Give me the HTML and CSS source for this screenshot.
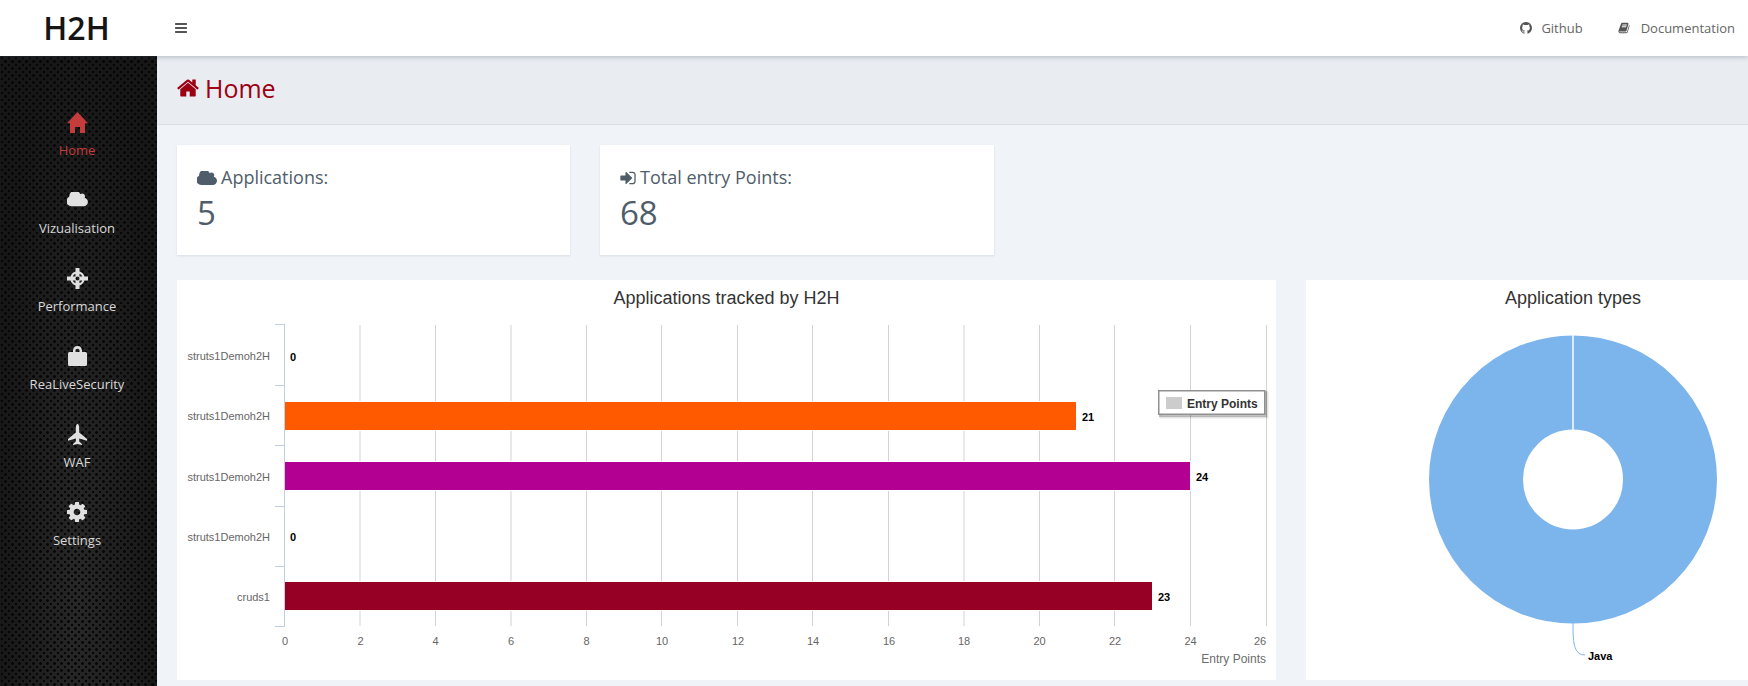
FILE: index.html
```html
<!DOCTYPE html>
<html lang="en">
<head>
<meta charset="utf-8">
<title>H2H</title>
<link rel="stylesheet" href="styles.css">
</head>
<body>
<header class="topbar">
  <div class="brand">H2H</div>
  <button class="toggle" aria-label="Toggle menu">
    <svg class="toggle-icon" viewBox="0 0 1792 1792"><path d="M1664 1344v128q0 26-19 45t-45 19h-1408q-26 0-45-19t-19-45v-128q0-26 19-45t45-19h1408q26 0 45 19t19 45zm0-512v128q0 26-19 45t-45 19h-1408q-26 0-45-19t-19-45v-128q0-26 19-45t45-19h1408q26 0 45 19t19 45zm0-512v128q0 26-19 45t-45 19h-1408q-26 0-45-19t-19-45v-128q0-26 19-45t45-19h1408q26 0 45 19t19 45z"/></svg>
  </button>
  <nav class="toplinks">
    <a class="toplink">
      <svg class="toplink-icon" viewBox="128 128 1536 1536"><path d="M896 128q209 0 385.500 103t279.500 279.500 103 385.500q0 251-146.500 451.500t-378.500 277.500q-27 5-40-7t-13-30q0-3 .5-76.500t.5-134.500q0-97-52-142 57-6 102.500-18t94-39 81-66.500 53-105 20.500-150.500q0-119-79-206 37-91-8-204-28-9-81 11t-92 44l-38 24q-93-26-192-26t-192 26q-16-11-42.500-27t-83.500-38.500-85-13.500q-45 113-8 204-79 87-79 206 0 85 20.500 150t52.500 105 80.500 67 94 39 102.500 18q-39 36-49 103-21 10-45 15t-57 5-65.500-21.500-55.500-62.500q-19-32-48.500-52t-49.500-24l-20-3q-21 0-29 4.500t-5 11.500 9 14 13 12l7 5q22 10 43.500 38t31.500 51l10 23q13 38 44 63t67 32 69.500 7 55.500-3.500l23-4q0 38 .5 88.500t.5 54.500q0 18-13 30t-40 7q-232-77-378.500-277.500t-146.500-451.500q0-209 103-385.500t279.500-279.500 385.500-103z"/></svg>
      <span>Github</span>
    </a>
    <a class="toplink toplink-doc">
      <svg class="toplink-icon" viewBox="0 128 1792 1536"><path d="M1703 478q40 57 18 129l-275 906q-19 64-76.500 107.500t-122.500 43.500h-923q-77 0-148.500-53.500t-99.500-131.500q-24-67-2-127 0-4 3-27t4-37q1-8-3-21.500t-3-19.500q2-11 8-21t16.500-23.500 16.500-23.500q23-38 45-91.500t30-91.500q3-10 .5-30t-.5-28q3-11 17-28t17-23q21-36 42-92t25-90q1-9-2.500-32t.5-28q4-13 22-30.500t22-22.500q19-26 42.500-84.500t27.500-96.500q1-8-3-25.500t-2-26.500q2-8 9-18t18-23 17-21q8-12 16.500-30.500t15-35 16-36 19.500-32 26.500-23.500 36-11.500 47.500 5.500l-1 3q38-9 51-9h761q74 0 114 56t18 130l-274 906q-36 119-71.500 153.500t-128.500 34.500h-869q-27 0-38 15-11 16-1 43 24 70 144 70h923q29 0 56-15.500t35-41.500l300-987q7-22 5-57 38 15 59 43zm-1064 2q-4 13 2 22.500t20 9.500h608q13 0 25.500-9.500t16.500-22.500l21-64q4-13-2-22.500t-20-9.500h-608q-13 0-25.500 9.500t-16.500 22.500zm-83 256q-4 13 2 22.500t20 9.500h608q13 0 25.500-9.500t16.500-22.500l21-64q4-13-2-22.500t-20-9.500h-608q-13 0-25.500 9.500t-16.500 22.500z"/></svg>
      <span>Documentation</span>
    </a>
  </nav>
</header>

<div class="layout">
  <aside class="sidebar">
    <a class="side-item active">
      <span class="side-icon"><svg width="21" height="21" viewBox="0 0 21 21"><path d="M10.500 0L21 11.300H18V21H13V15H8V21H3V11.300H0Z"/></svg></span>
      <span class="side-label">Home</span>
    </a>
    <a class="side-item">
      <span class="side-icon"><svg width="21" height="17" viewBox="0 256 1856 1520"><path d="M1856 1152q0 159-112.500 271.500t-271.500 112.500h-1088q-185 0-316.500-131.500t-131.500-316.500q0-132 71-241.500t187-163.500q-2-28-2-43 0-212 150-362t362-150q158 0 286.500 88t187.500 230q70-62 166-62 106 0 181 75t75 181q0 75-41 138 129 30 213 134.500t84 239.500z"/></svg></span>
      <span class="side-label">Vizualisation</span>
    </a>
    <a class="side-item">
      <span class="side-icon"><svg width="21" height="21" viewBox="0 0 21 21"><path fill-rule="evenodd" d="M8.500 0h4v3.600a7.200 7.200 0 0 1 4.900 4.900H21v4h-3.600a7.200 7.200 0 0 1-4.900 4.900V21h-4v-3.600a7.200 7.200 0 0 1-4.900-4.900H0v-4h3.600a7.200 7.200 0 0 1 4.900-4.900ZM8.500 5.700a5.200 5.200 0 0 0-2.800 2.800H8.500ZM12.500 5.700v2.800h2.800a5.200 5.200 0 0 0-2.800-2.800ZM5.700 12.500a5.200 5.200 0 0 0 2.800 2.800v-2.800ZM12.500 12.500v2.800a5.200 5.200 0 0 0 2.800-2.800ZM10.500 8.500a2 2 0 1 0 0 4 2 2 0 0 0 0-4Z"/></svg></span>
      <span class="side-label">Performance</span>
    </a>
    <a class="side-item">
      <span class="side-icon"><svg width="19" height="20" viewBox="0 0 19 20"><path fill-rule="evenodd" d="M1.500 6H5V4.700C5 1.800 6.800 0 9.500 0S14 1.800 14 4.700V6H17.500A1.500 1.500 0 0 1 19 7.500V18.500A1.500 1.500 0 0 1 17.500 20H1.500A1.500 1.500 0 0 1 0 18.500V7.500A1.500 1.500 0 0 1 1.500 6ZM7.500 6H11.500V4.700C11.500 3.500 10.800 2.800 9.500 2.800S7.500 3.500 7.500 4.700Z"/></svg></span>
      <span class="side-label">ReaLiveSecurity</span>
    </a>
    <a class="side-item">
      <span class="side-icon"><svg width="19" height="21" viewBox="0 0 19 21"><path d="M9.500 0C10.600 0 11.200 2 11.200 4V8.500L19 15V16.800L11.200 14.500V17.500L14 20V21L9.500 20L5 21V20L7.800 17.500V14.500L0 16.800V15L7.800 8.500V4C7.800 2 8.400 0 9.500 0Z"/></svg></span>
      <span class="side-label">WAF</span>
    </a>
    <a class="side-item">
      <span class="side-icon"><svg width="20" height="20" viewBox="128 128 1536 1536"><path d="M1152 896q0-106-75-181t-181-75-181 75-75 181 75 181 181 75 181-75 75-181zm512-109v222q0 12-8 23t-20 13l-185 28q-19 54-39 91 35 50 107 138 10 12 10 25t-9 23q-27 37-99 108t-94 71q-12 0-26-9l-138-108q-44 23-91 38-16 136-29 186-7 28-36 28h-222q-14 0-24.500-8.500t-11.500-21.500l-28-184q-49-16-90-37l-141 107q-10 9-25 9-14 0-25-11-126-114-165-168-7-10-7-23 0-12 8-23 15-21 51-66.500t54-70.500q-27-50-41-99l-183-27q-13-2-21-12.500t-8-23.500v-222q0-12 8-23t19-13l186-28q14-46 39-92-40-57-107-138-10-12-10-24 0-10 9-23 26-36 98.500-107.500t94.500-71.500q13 0 26 10l138 107q44-23 91-38 16-136 29-186 7-28 36-28h222q14 0 24.500 8.500t11.500 21.500l28 184q49 16 90 37l142-107q9-9 24-9 13 0 25 10 129 119 165 170 7 8 7 22 0 12-8 23-15 21-51 66.500t-54 70.500q26 50 41 98l183 28q13 2 21 12.500t8 23.500z"/></svg></span>
      <span class="side-label">Settings</span>
    </a>
  </aside>

  <main class="main">
    <div class="page-header">
      <h1 class="page-title">
        <svg class="page-title-icon" viewBox="0 0 1792 1792"><path d="M1472 992v480q0 26-19 45t-45 19h-384v-384h-256v384h-384q-26 0-45-19t-19-45v-480q0-1 .5-3t.5-3l575-474 575 474q1 2 1 6zm223-69l-62 74q-8 9-21 11h-3q-13 0-21-7l-692-577-692 577q-12 8-24 7-13-2-21-11l-62-74q-8-10-7-23.500t11-21.500l719-599q32-26 76-26t76 26l244 204v-195q0-14 9-23t23-9h192q14 0 23 9t9 23v408l219 182q10 8 11 21.500t-7 23.500z"/></svg>
        <span>Home</span>
      </h1>
    </div>

    <div class="content">
      <section class="stats">
        <div class="stat-card">
          <div class="stat-label">
            <svg class="stat-cloud" viewBox="0 256 1856 1280"><path d="M1856 1152q0 159-112.500 271.500t-271.500 112.500h-1088q-185 0-316.500-131.500t-131.500-316.500q0-132 71-241.500t187-163.500q-2-28-2-43 0-212 150-362t362-150q158 0 286.500 88t187.500 230q70-62 166-62 106 0 181 75t75 181q0 75-41 138 129 30 213 134.500t84 239.500z"/></svg>
            <span>Applications:</span>
          </div>
          <div class="stat-value">5</div>
        </div>
        <div class="stat-card">
          <div class="stat-label">
            <svg class="stat-signin" viewBox="0 192 1536 1408"><path d="M1184 896q0 26-19 45l-544 544q-19 19-45 19t-45-19-19-45v-288h-448q-26 0-45-19t-19-45v-384q0-26 19-45t45-19h448v-288q0-26 19-45t45-19 45 19l544 544q19 19 19 45zm352-352v704q0 119-84.500 203.500t-203.500 84.500h-320q-13 0-22.500-9.500t-9.500-22.500q0-4-1-20t-.5-26.500 3-23.500 10-19.500 20.500-6.500h320q66 0 113-47t47-113v-704q0-66-47-113t-113-47h-312l-11.500-1-11.500-3-8-5.500-7-9-2-13.500q0-4-1-20t-.5-26.500 3-23.500 10-19.500 20.500-6.500h320q119 0 203.500 84.500t84.500 203.500z"/></svg>
            <span>Total entry Points:</span>
          </div>
          <div class="stat-value">68</div>
        </div>
      </section>

      <section class="charts">
        <div class="chart-panel chart-bars">
          <svg class="chart-svg" width="1099" height="400" viewBox="177 280 1099 400">
            <text class="chart-title" x="726.500" y="304" text-anchor="middle">Applications tracked by H2H</text>
            <g class="grid">
              <line x1="360" y1="325" x2="360" y2="626"/>
              <line x1="435.500" y1="325" x2="435.500" y2="626"/>
              <line x1="511" y1="325" x2="511" y2="626"/>
              <line x1="586.500" y1="325" x2="586.500" y2="626"/>
              <line x1="661.500" y1="325" x2="661.500" y2="626"/>
              <line x1="737.500" y1="325" x2="737.500" y2="626"/>
              <line x1="812.500" y1="325" x2="812.500" y2="626"/>
              <line x1="888.500" y1="325" x2="888.500" y2="626"/>
              <line x1="964" y1="325" x2="964" y2="626"/>
              <line x1="1039.500" y1="325" x2="1039.500" y2="626"/>
              <line x1="1114.500" y1="325" x2="1114.500" y2="626"/>
              <line x1="1190.500" y1="325" x2="1190.500" y2="626"/>
              <line x1="1266.500" y1="325" x2="1266.500" y2="626"/>
            </g>
            <rect class="bar bar-orange" x="284.500" y="401.500" width="792" height="29"/>
            <rect class="bar bar-purple" x="284.500" y="461.500" width="906" height="29"/>
            <rect class="bar bar-crimson" x="284.500" y="581.500" width="868" height="29"/>
            <g class="axis">
              <line x1="284.500" y1="324.500" x2="284.500" y2="626.500"/>
              <line x1="275" y1="324.500" x2="285" y2="324.500"/>
              <line x1="275" y1="385.500" x2="285" y2="385.500"/>
              <line x1="275" y1="445.500" x2="285" y2="445.500"/>
              <line x1="275" y1="506.500" x2="285" y2="506.500"/>
              <line x1="275" y1="566.500" x2="285" y2="566.500"/>
              <line x1="275" y1="626.500" x2="285" y2="626.500"/>
            </g>
            <g class="y-labels" text-anchor="end">
              <text x="270" y="360">struts1Demoh2H</text>
              <text x="270" y="420">struts1Demoh2H</text>
              <text x="270" y="481">struts1Demoh2H</text>
              <text x="270" y="541">struts1Demoh2H</text>
              <text x="270" y="601">cruds1</text>
            </g>
            <g class="data-labels">
              <text x="290" y="361">0</text>
              <text x="1082" y="421">21</text>
              <text x="1196" y="481">24</text>
              <text x="290" y="541">0</text>
              <text x="1158" y="601">23</text>
            </g>
            <g class="x-labels" text-anchor="middle">
              <text x="285" y="645">0</text>
              <text x="360.500" y="645">2</text>
              <text x="435.500" y="645">4</text>
              <text x="511" y="645">6</text>
              <text x="586.500" y="645">8</text>
              <text x="662" y="645">10</text>
              <text x="738" y="645">12</text>
              <text x="813" y="645">14</text>
              <text x="889" y="645">16</text>
              <text x="964" y="645">18</text>
              <text x="1039.500" y="645">20</text>
              <text x="1115" y="645">22</text>
              <text x="1190.500" y="645">24</text>
              <text x="1260" y="645">26</text>
            </g>
            <text class="axis-title" x="1266" y="663" text-anchor="end">Entry Points</text>
            <g class="legend">
              <rect class="legend-shadow-3" x="1161" y="393" width="106" height="24"/>
              <rect class="legend-shadow-2" x="1160" y="392" width="106" height="24"/>
              <rect class="legend-box" x="1158.750" y="390.750" width="106" height="23.500"/>
              <rect class="legend-swatch" x="1166" y="397" width="16" height="12"/>
              <text class="legend-text" x="1187" y="408">Entry Points</text>
            </g>
          </svg>
        </div>
        <div class="chart-panel chart-donut">
          <svg class="chart-svg" width="442" height="400" viewBox="1306 280 442 400">
            <text class="chart-title" x="1573" y="304" text-anchor="middle">Application types</text>
            <circle class="donut" cx="1573" cy="479.500" r="97" />
            <line class="donut-seam" x1="1573" y1="334" x2="1573" y2="430"/>
            <path class="leader" d="M1573 623C1573 640 1573 655 1585 655"/>
            <text class="donut-label" x="1588" y="660">Java</text>
          </svg>
        </div>
      </section>
    </div>
  </main>
</div>
</body>
</html>
```
FILE: styles.css
```css
* { box-sizing: border-box; }
html, body { margin: 0; height: 100%; overflow: hidden; }
body { font-family: "Open Sans", "Liberation Sans", sans-serif; background: #f0f3f8; color: #4f5d6b; }

.topbar {
  position: relative;
  z-index: 2;
  display: flex;
  align-items: center;
  height: 56px;
  background: #fff;
  box-shadow: 0 1px 5px rgba(60, 70, 90, .3);
}
.brand {
  width: 157px;
  padding-right: 4px;
  text-align: center;
  font-size: 32px;
  font-weight: 600;
  color: #151515;
  line-height: 52px;
}
.toggle {
  display: flex;
  margin-left: 17px;
  padding: 0;
  border: 0;
  background: none;
}
.toggle-icon { width: 14px; height: 14px; fill: #555; }
.toplinks {
  display: flex;
  gap: 35px;
  margin-left: auto;
  padding-right: 13px;
}
.toplink {
  display: flex;
  align-items: center;
  gap: 9px;
  font-size: 13px;
  line-height: 20px;
  color: #666;
}
.toplink-doc { gap: 11px; }
.toplink-icon { width: 12px; height: 12px; fill: #555; }

.layout { display: flex; height: 630px; }

.sidebar {
  flex: 0 0 157px;
  padding: 54px 3px 0 0;
  background-color: #181818;
  background-image:
    radial-gradient(circle at 2px 2px, #060606 1.1px, transparent 1.6px),
    radial-gradient(circle at 5.500px 5.500px, #060606 1.1px, transparent 1.6px),
    radial-gradient(ellipse at 50% 85%, #282828 0, #171717 75%);
  background-size: 7px 7px, 7px 7px, 100% 100%;
}
.side-item {
  display: flex;
  flex-direction: column;
  align-items: center;
  gap: 6px;
  margin-bottom: 28px;
  color: #d8d8d8;
}
.side-icon {
  display: flex;
  align-items: center;
  justify-content: center;
  height: 24px;
}
.side-icon svg { fill: #e0e0e0; display: block; }
.side-label { font-size: 13px; line-height: 20px; }
.side-item.active { color: #c53c3c; }
.side-item.active .side-icon svg { fill: #c53c3c; }

.main { flex: 1; min-width: 0; display: flex; flex-direction: column; }

.page-header {
  flex: 0 0 69px;
  display: flex;
  align-items: center;
  padding: 0 20px 4px;
  background: #e9ecf1;
  border-bottom: 1px solid #dcdfe5;
}
.page-title {
  display: flex;
  align-items: center;
  gap: 5px;
  margin: 0;
  font-size: 25px;
  font-weight: 400;
  line-height: 30px;
  color: #9b0013;
}
.page-title-icon { width: 24px; height: 24px; margin-left: -1px; fill: #9b0013; }

.content { padding: 20px 0 0 20px; }

.stats { display: grid; grid-template-columns: 393px 394px; gap: 30px; }
.stat-card {
  height: 110px;
  padding: 20px;
  background: #fff;
  box-shadow: 0 1px 2px rgba(60, 70, 90, .12);
}
.stat-label {
  display: flex;
  align-items: center;
  gap: 4px;
  font-size: 18px;
  line-height: 25px;
}
.stat-cloud { width: 20px; height: 14px; fill: #4f5d6b; }
.stat-signin { width: 16px; height: 14px; fill: #4f5d6b; }
.stat-value { margin-top: 3px; font-size: 33px; line-height: 40px; }

.charts { display: flex; gap: 30px; margin-top: 25px; }
.chart-panel { height: 400px; background: #fff; }
.chart-bars { flex: 0 0 1099px; }
.chart-donut { flex: 0 0 442px; }
.chart-svg { display: block; font-family: "Liberation Sans", Arial, sans-serif; }

.chart-title { font-size: 18px; fill: #333; }
.grid line { stroke: #d3d3d3; stroke-width: 1; }
.axis line { stroke: #c0d0e0; stroke-width: 1; }
.bar { stroke: #fff; stroke-width: 1; }
.bar-orange { fill: #ff5a00; }
.bar-purple { fill: #b30093; }
.bar-crimson { fill: #960024; }
.y-labels text, .x-labels text { font-size: 11px; fill: #666; }
.data-labels text { font-size: 11px; font-weight: 700; fill: #000; }
.axis-title { font-size: 12px; fill: #6d6d6d; }
.legend-shadow-3 { fill: none; stroke: #000; stroke-opacity: .1; stroke-width: 3; }
.legend-shadow-2 { fill: none; stroke: #000; stroke-opacity: .2; stroke-width: 2; }
.legend-box { fill: #fff; stroke: #909090; stroke-width: 1.500; }
.legend-swatch { fill: #ccc; }
.legend-text { font-size: 12px; font-weight: 700; fill: #333; }

.donut { fill: none; stroke: #7cb5ec; stroke-width: 94; }
.donut-seam { stroke: #fff; stroke-width: 1.500; }
.leader { fill: none; stroke: #7cb5ec; stroke-width: 1; }
.donut-label { font-size: 11px; font-weight: 700; fill: #000; }
```
